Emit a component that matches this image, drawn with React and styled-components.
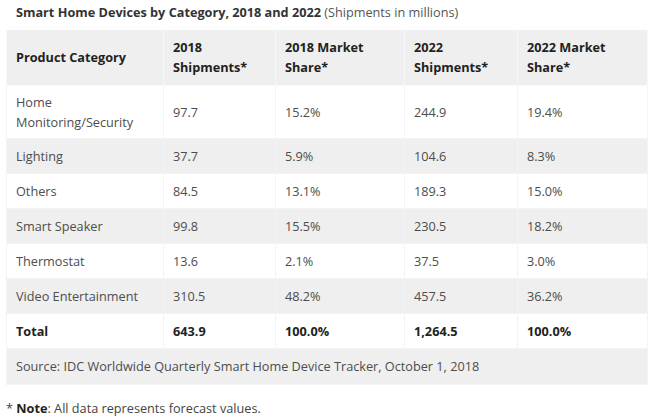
import React from "react";
import styled, { createGlobalStyle } from "styled-components";

const GlobalStyle = createGlobalStyle`
  body {
    margin: 0;
    background: #fff;
    font-family: "Open Sans", "Noto Sans", sans-serif;
  }
`;

const rows = [
  ["Home Monitoring/Security", "97.7", "15.2%", "244.9", "19.4%"],
  ["Lighting", "37.7", "5.9%", "104.6", "8.3%"],
  ["Others", "84.5", "13.1%", "189.3", "15.0%"],
  ["Smart Speaker", "99.8", "15.5%", "230.5", "18.2%"],
  ["Thermostat", "13.6", "2.1%", "37.5", "3.0%"],
  ["Video Entertainment", "310.5", "48.2%", "457.5", "36.2%"],
];

const App = () => {
  return (
    <Page>
      <GlobalStyle />
      <Box>
        <Title>
          <b>Smart Home Devices by Category, 2018 and 2022</b> (Shipments in millions)
        </Title>
        <Table>
          <colgroup>
            <col style={{ width: 157 }} />
            <col style={{ width: 112 }} />
            <col style={{ width: 129 }} />
            <col style={{ width: 113 }} />
            <col style={{ width: 130 }} />
          </colgroup>
          <thead>
            <HeadRow>
              <Th>Product Category</Th>
              <Th>2018 Shipments*</Th>
              <Th>2018 Market Share*</Th>
              <Th>2022 Shipments*</Th>
              <Th>2022 Market Share*</Th>
            </HeadRow>
          </thead>
          <tbody>
            {rows.map((r, i) => (
              <Row key={r[0]} $shaded={i % 2 === 1} $tall={i === 0}>
                {r.map((c, j) => (
                  <Td key={j}>{c}</Td>
                ))}
              </Row>
            ))}
            <Row $total>
              <Td>Total</Td>
              <Td>643.9</Td>
              <Td>100.0%</Td>
              <Td>1,264.5</Td>
              <Td>100.0%</Td>
            </Row>
            <Row $shaded $source>
              <Td colSpan={5}>
                Source: IDC Worldwide Quarterly Smart Home Device Tracker, October 1, 2018
              </Td>
            </Row>
          </tbody>
        </Table>
      </Box>
      <Note>
        * <b>Note</b>: All data represents forecast values.
      </Note>
    </Page>
  );
};

export default App;

const Page = styled.div`
  width: 655px;
  height: 420px;
  overflow: hidden;
  padding: 0 7px 0 6px;
  box-sizing: border-box;
`;

const Box = styled.div`
  width: 642px;
`;

const Title = styled.div`
  height: 30px;
  padding: 2px 10px 0;
  box-sizing: border-box;
  font-size: 12.7px;
  line-height: 20px;
  color: #555;

  b {
    color: #333;
    font-weight: 700;
  }
`;

const Table = styled.table`
  width: 641px;
  border-collapse: collapse;
  table-layout: fixed;
  font-size: 12.7px;
  line-height: 20px;
`;

const HeadRow = styled.tr`
  height: 55px;
  background: #efefef;
`;

const Th = styled.th`
  text-align: left;
  padding: 0 9px;
  font-weight: 700;
  color: #222;
  border: 1px solid #f8f8f8;
  border-top: none;
`;

const Row = styled.tr`
  height: ${(p) => (p.$tall ? 53 : p.$source ? 36 : 35)}px;
  background: ${(p) => (p.$shaded ? "#efefef" : "#fff")};
  color: ${(p) => (p.$total ? "#222" : "#4d4d4d")};
  font-weight: ${(p) => (p.$total ? 700 : 400)};
`;

const Td = styled.td`
  padding: 0 9px;
  border: 1px solid #f4f4f4;
  vertical-align: middle;
`;

const Note = styled.div`
  margin-top: 13px;
  font-size: 12.7px;
  line-height: 20px;
  color: #444;

  b {
    color: #222;
  }
`;
